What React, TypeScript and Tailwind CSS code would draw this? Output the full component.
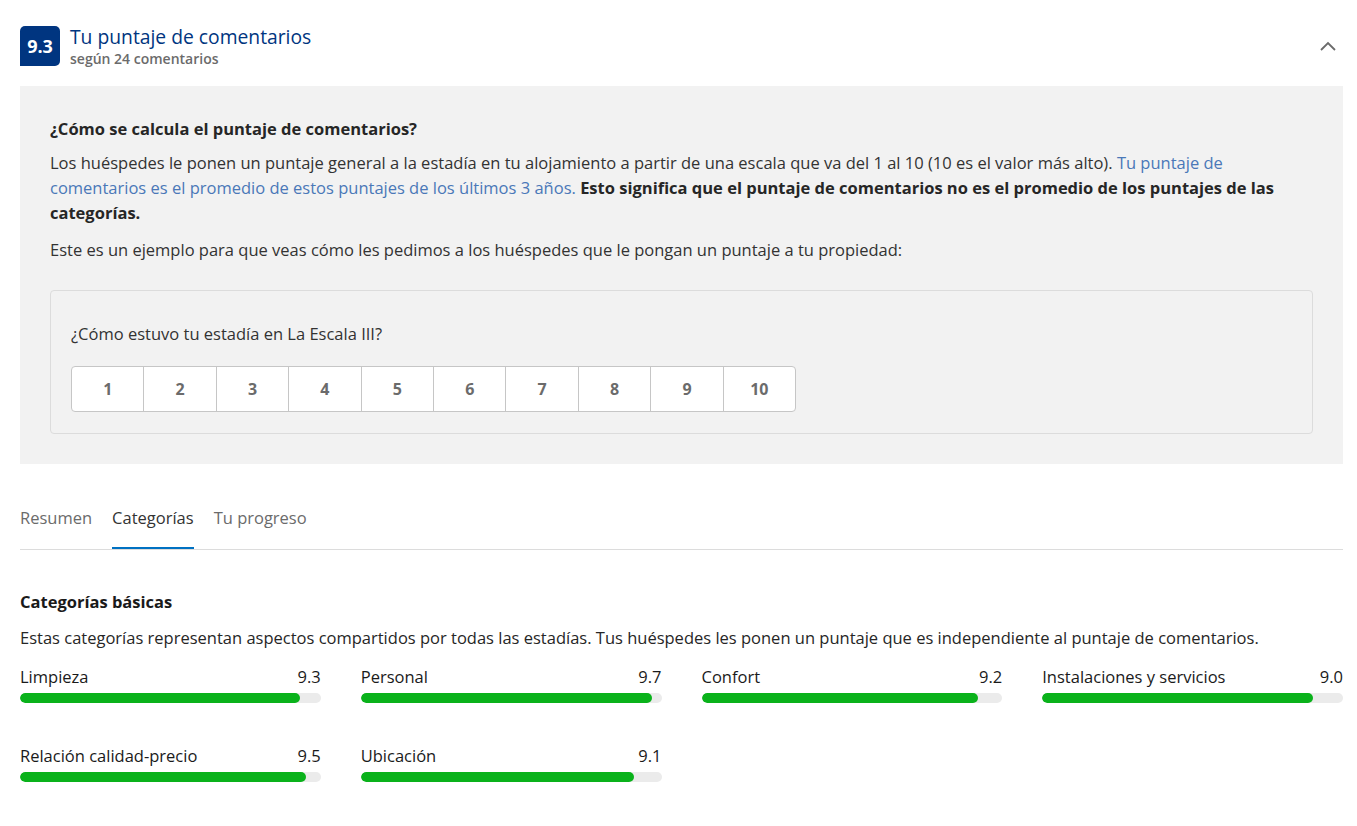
import React from "react";

const cats = [
  { name: "Limpieza", v: 9.3 },
  { name: "Personal", v: 9.7 },
  { name: "Confort", v: 9.2 },
  { name: "Instalaciones y servicios", v: 9.0 },
  { name: "Relación calidad-precio", v: 9.5 },
  { name: "Ubicación", v: 9.1 },
];

export default function App() {
  return (
    <div
      className="w-[1357px] min-h-[826px] bg-white text-[#262626]"
      style={{ fontFamily: '"Open Sans", "Noto Sans", sans-serif' }}
    >
      <div className="pl-[20px] pr-[14px] pt-[26px]">
        <div className="flex items-start">
          <div className="w-[40px] h-[40px] bg-[#003580] text-white rounded-t-[5px] rounded-br-[5px] flex items-center justify-center text-[18px] font-bold">
            9.3
          </div>
          <div className="ml-[10px] flex-1 -mt-[2px]">
            <div className="text-[19.3px] leading-[26px] text-[#003580] font-medium">Tu puntaje de comentarios</div>
            <div className="text-[14px] leading-[18px] text-[#6b6b6b] font-semibold">según 24 comentarios</div>
          </div>
          <svg className="mt-[14px] mr-[6px]" width="18" height="12" viewBox="0 0 18 12" fill="none">
            <path d="M2 10 L9 3 L16 10" stroke="#6b6b6b" strokeWidth="1.8" />
          </svg>
        </div>

        <div className="mt-[18px] bg-[#f2f2f2] px-[30px] pt-[30px] pb-[30px] text-[16.5px]">
          <div className="font-bold leading-[26px]">¿Cómo se calcula el puntaje de comentarios?</div>
          <p className="mt-[8px] leading-[25px] text-[#333]">
            Los huéspedes le ponen un puntaje general a la estadía en tu alojamiento a partir de una escala que va del 1 al 10 (10 es el valor más alto).{" "}
            <span className="text-[#4a78b8]">Tu puntaje de comentarios es el promedio de estos puntajes de los últimos 3 años.</span>{" "}
            <span className="font-bold text-[#262626]">Esto significa que el puntaje de comentarios no es el promedio de los puntajes de las categorías.</span>
          </p>
          <p className="mt-[12px] leading-[25px] text-[#333]">
            Este es un ejemplo para que veas cómo les pedimos a los huéspedes que le pongan un puntaje a tu propiedad:
          </p>
          <div className="mt-[28px] border border-[#dcdcdc] rounded-[4px] px-[20px] pt-[31px] pb-[21px]">
            <div className="leading-[24px] text-[#333]">¿Cómo estuvo tu estadía en La Escala III?</div>
            <div className="mt-[20px] flex w-[725px] h-[46px] bg-white border border-[#c6c6c6] rounded-[4px]">
              {[1, 2, 3, 4, 5, 6, 7, 8, 9, 10].map((n, i) => (
                <div
                  key={n}
                  className={`flex-1 flex items-center justify-center text-[16px] font-bold text-[#6b6b6b] ${i > 0 ? "border-l border-[#c6c6c6]" : ""}`}
                >
                  {n}
                </div>
              ))}
            </div>
          </div>
        </div>

        <div className="mt-[42px] flex border-b border-[#dcdcdc] text-[16.5px]">
          <div className="pb-[18px] text-[#6b6b6b]">Resumen</div>
          <div className="ml-[20px] pb-[16px] text-[#333] border-b-[2px] border-[#0071c2]">Categorías</div>
          <div className="ml-[20px] pb-[18px] text-[#6b6b6b]">Tu progreso</div>
        </div>

        <div className="mt-[39px] text-[16.5px] font-bold leading-[26px] text-[#1a1a1a]">Categorías básicas</div>
        <div className="mt-[11px] text-[16.5px] leading-[24px] text-[#262626]">
          Estas categorías representan aspectos compartidos por todas las estadías. Tus huéspedes les ponen un puntaje que es independiente al puntaje de comentarios.
        </div>
        <div className="mt-[15px] grid grid-cols-4 gap-x-[40px] gap-y-[41px]">
          {cats.map((c) => (
            <div key={c.name}>
              <div className="flex justify-between text-[16.5px] leading-[24px] text-[#1a1a1a]">
                <span>{c.name}</span>
                <span>{c.v.toFixed(1)}</span>
              </div>
              <div className="mt-[4px] h-[10px] rounded-full bg-[#ebebeb] overflow-hidden">
                <div className="h-full rounded-full bg-[#0ab21b]" style={{ width: `${c.v * 10}%` }} />
              </div>
            </div>
          ))}
        </div>
      </div>
    </div>
  );
}
